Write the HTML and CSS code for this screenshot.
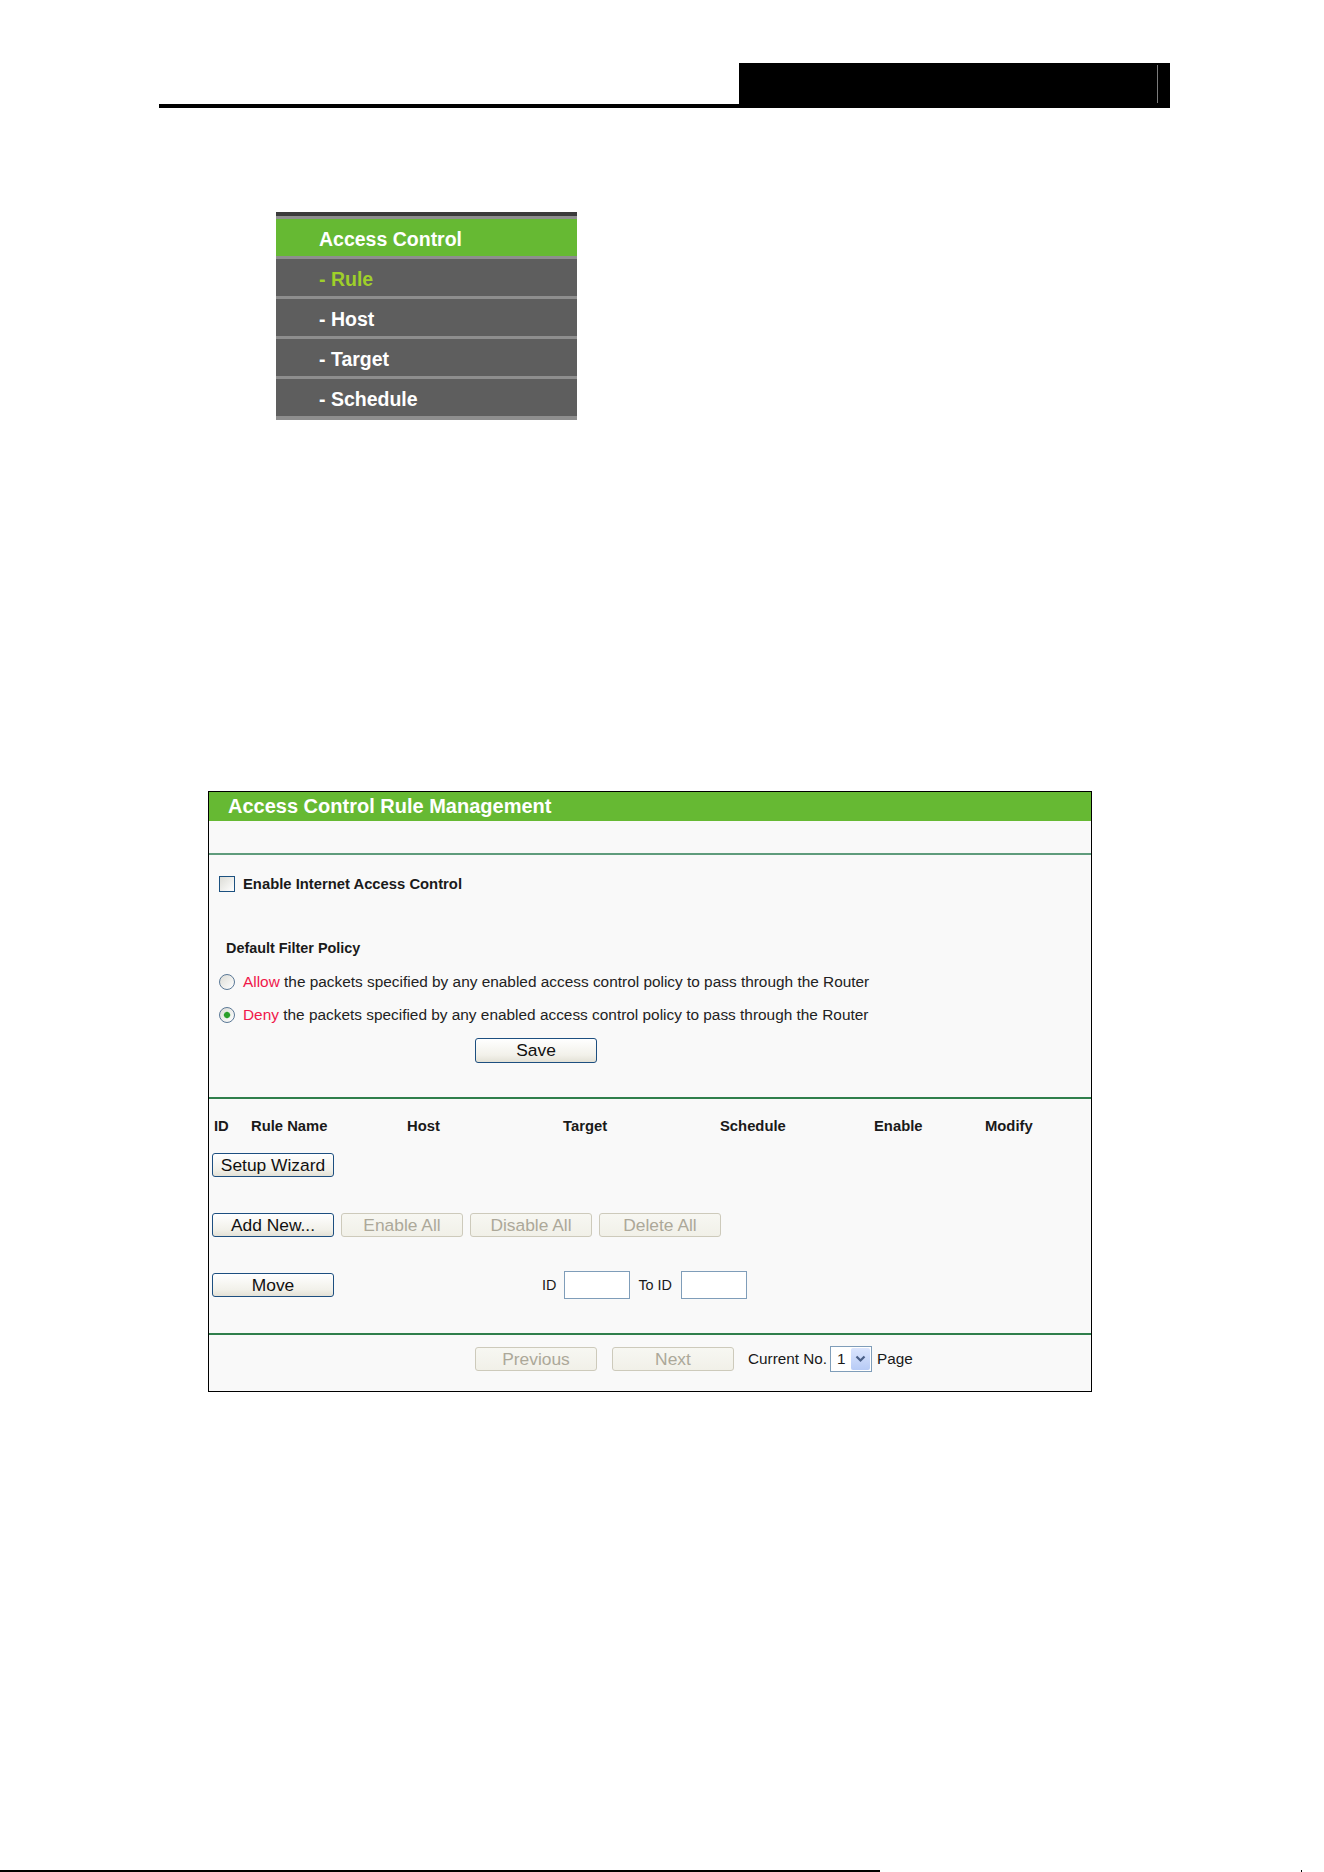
FILE: index.html
```html
<!DOCTYPE html>
<html lang="en">
<head>
<meta charset="utf-8">
<title>Access Control Rule Management</title>
<link rel="stylesheet" href="styles.css">
</head>
<body>
<div class="page">
  <header class="doc-head">
    <div class="doc-rule"></div>
    <div class="doc-tab"><div class="doc-tab-inner"></div></div>
  </header>

  <nav class="menu">
    <div class="menu-item menu-title">Access Control</div>
    <div class="menu-item menu-active">- Rule</div>
    <div class="menu-item">- Host</div>
    <div class="menu-item">- Target</div>
    <div class="menu-item">- Schedule</div>
  </nav>

  <section class="panel">
    <div class="panel-title">Access Control Rule Management</div>
    <div class="panel-spacer"></div>
    <div class="divider divider-light"></div>

    <div class="sec-policy">
      <label class="row row-check"><input type="checkbox" class="cb"><span class="lbl-enable">Enable Internet Access Control</span></label>
      <div class="row row-title"><span class="lbl-policy">Default Filter Policy</span></div>
      <label class="row row-radio row-allow"><input type="radio" name="policy" class="rb"><span class="txt"><span class="red">Allow</span> the packets specified by any enabled access control policy to pass through the Router</span></label>
      <label class="row row-radio row-deny"><input type="radio" name="policy" class="rb" checked><span class="txt"><span class="red">Deny</span> the packets specified by any enabled access control policy to pass through the Router</span></label>
      <div class="row-save"><button class="btn btn-save" type="button">Save</button></div>
    </div>

    <div class="divider"></div>

    <div class="sec-rules">
      <div class="cols">
        <span>ID</span><span>Rule Name</span><span>Host</span><span>Target</span><span>Schedule</span><span>Enable</span><span>Modify</span>
      </div>
      <div class="btn-row r-wizard"><button class="btn" type="button">Setup Wizard</button></div>
      <div class="btn-row r-actions">
        <button class="btn" type="button">Add New...</button>
        <button class="btn" type="button" disabled>Enable All</button>
        <button class="btn" type="button" disabled>Disable All</button>
        <button class="btn" type="button" disabled>Delete All</button>
      </div>
      <div class="btn-row r-move">
        <button class="btn" type="button">Move</button>
        <span class="mv-lbl mv-id">ID</span>
        <input class="txtbox" type="text">
        <span class="mv-lbl mv-to">To ID</span>
        <input class="txtbox txtbox2" type="text">
      </div>
    </div>

    <div class="divider"></div>

    <div class="pager">
      <button class="btn" type="button" disabled>Previous</button>
      <button class="btn btn-next" type="button" disabled>Next</button>
      <span class="pg-lbl">Current No.</span>
      <div class="select">
        <span class="select-val">1</span>
        <span class="select-btn"><svg width="11" height="8" viewBox="0 0 11 8"><path d="M1.5 1.5 L5.5 5.5 L9.5 1.5" fill="none" stroke="#4a5f86" stroke-width="2.2"/></svg></span>
      </div>
      <span class="pg-page">Page</span>
    </div>
  </section>

  <footer class="doc-foot"><div class="foot-rule"></div><div class="foot-tick"></div></footer>
</div>
</body>
</html>
```

FILE: styles.css
```css
* { box-sizing: border-box; }
html, body { margin: 0; padding: 0; background: #ffffff; }
body { font-family: "Liberation Sans", Arial, sans-serif; color: #1a1a1a; }
.page { width: 1324px; height: 1872px; overflow: hidden; }

/* document header */
.doc-head { display: flex; align-items: flex-end; margin: 63px 0 0 159px; width: 1011px; height: 45px; }
.doc-rule { flex: 1; height: 4px; background: #000; }
.doc-tab { width: 431px; height: 45px; background: #000; padding: 2px 12px 5px 0; display: flex; justify-content: flex-end; }
.doc-tab-inner { width: 1px; background: #7a7a7a; }

/* side menu */
.menu { margin: 104px 0 0 276px; width: 301px; border-top: 4px solid #3b3b3b; border-bottom: 4px solid #8e8e8e; background: #5e5e5e; }
.menu-item { height: 40px; border-top: 3px solid #8e8e8e; padding-left: 43px; font-weight: bold; font-size: 19.5px; line-height: 40px; color: #ffffff; white-space: nowrap; }
.menu-title { background: #66b933; }
.menu-active { color: #9fcf2a; }

/* panel */
.panel { margin: 371px 0 0 208px; width: 884px; border: 1px solid #000; background: #f9f9f9; }
.panel-title { height: 29px; background: #66b933; color: #fff; font-weight: bold; font-size: 20px; line-height: 29px; padding-left: 19px; white-space: nowrap; }
.panel-spacer { height: 32px; }
.divider { height: 2px; background: #2f7f4c; }
.divider-light { background: #5f9c7c; }

.sec-policy { padding: 19px 0 34px; }
.row { display: flex; align-items: center; height: 20px; white-space: nowrap; }
.row-check { padding-left: 10px; }
.row-title { margin-top: 44px; padding-left: 17px; }
.row-allow { margin-top: 14px; padding-left: 10px; }
.row-deny { margin-top: 13px; padding-left: 10px; }
.lbl-enable { font-weight: bold; font-size: 14.8px; margin-left: 8px; }
.lbl-policy { font-weight: bold; font-size: 14.4px; }
.txt { font-size: 15.4px; margin-left: 8px; color: #222; }
.red { color: #f0174a; }

.cb, .rb { -webkit-appearance: none; appearance: none; margin: 0; width: 16px; height: 16px; flex: none; }
.cb { border: 1px solid #1c5180; background: linear-gradient(135deg, #dcdcd6, #ffffff); }
.rb { border: 1px solid #5a7896; border-radius: 50%; background: linear-gradient(135deg, #dcdcd6, #ffffff); }
.rb:checked { background: radial-gradient(circle, #2a9e2a 0 2.6px, #9fd69f 3.2px, transparent 3.8px), linear-gradient(135deg, #dcdcd6, #ffffff); }

.row-save { margin-top: 13px; padding-left: 266px; }

/* buttons */
.btn { font-family: inherit; font-size: 17.4px; color: #111; width: 122px; height: 24px; padding: 0; border: 1px solid #1d4f80; border-radius: 3px; background: linear-gradient(#ffffff, #f2f1ea 70%, #e3e1d6); display: inline-flex; align-items: center; justify-content: center; flex: none; white-space: nowrap; }
.btn:disabled { color: #aca899; border-color: #cdcabb; background: linear-gradient(#f7f7f2, #f1f0e8); }
.btn-save { height: 25px; }

/* rules section */
.sec-rules { padding: 17px 0 34px; }
.cols { display: grid; grid-template-columns: 37px 156px 156px 157px 154px 111px 1fr; height: 20px; align-items: center; padding-left: 5px; font-weight: bold; font-size: 14.8px; white-space: nowrap; }
.btn-row { display: flex; align-items: center; padding-left: 3px; gap: 7px; }
.r-wizard { margin-top: 17px; }
.r-actions { margin-top: 36px; }
.r-move { margin-top: 34px; height: 28px; gap: 0; }
.mv-lbl { font-size: 14.4px; }
.mv-id { margin-left: 208px; }
.mv-to { margin-left: 8px; }
.txtbox { width: 66px; height: 28px; margin: 0 0 0 8px; border: 1px solid #7f9db9; background: #fff; padding: 0; }
.txtbox2 { margin-left: 9px; }

/* pager */
.pager { display: flex; align-items: center; height: 26px; margin: 11px 0 19px; padding-left: 266px; }
.btn-next { margin-left: 15px; }
.pg-lbl { font-size: 15.3px; margin-left: 14px; }
.select { display: flex; align-items: center; width: 42px; height: 26px; margin-left: 3px; border: 1px solid #7f9db9; background: #fff; padding: 1px; }
.select-val { flex: 1; font-size: 15.3px; padding-left: 5px; }
.select-btn { width: 19px; height: 100%; border-radius: 2px; background: linear-gradient(#dbe5fd, #b7cbf6); display: flex; align-items: center; justify-content: center; }
.pg-page { font-size: 15.3px; margin-left: 5px; }

/* footer */
.doc-foot { display: flex; margin-top: 478px; height: 2px; }
.foot-rule { width: 880px; background: #000; }
.foot-tick { width: 1px; margin-left: 421px; background: #000; }
```
